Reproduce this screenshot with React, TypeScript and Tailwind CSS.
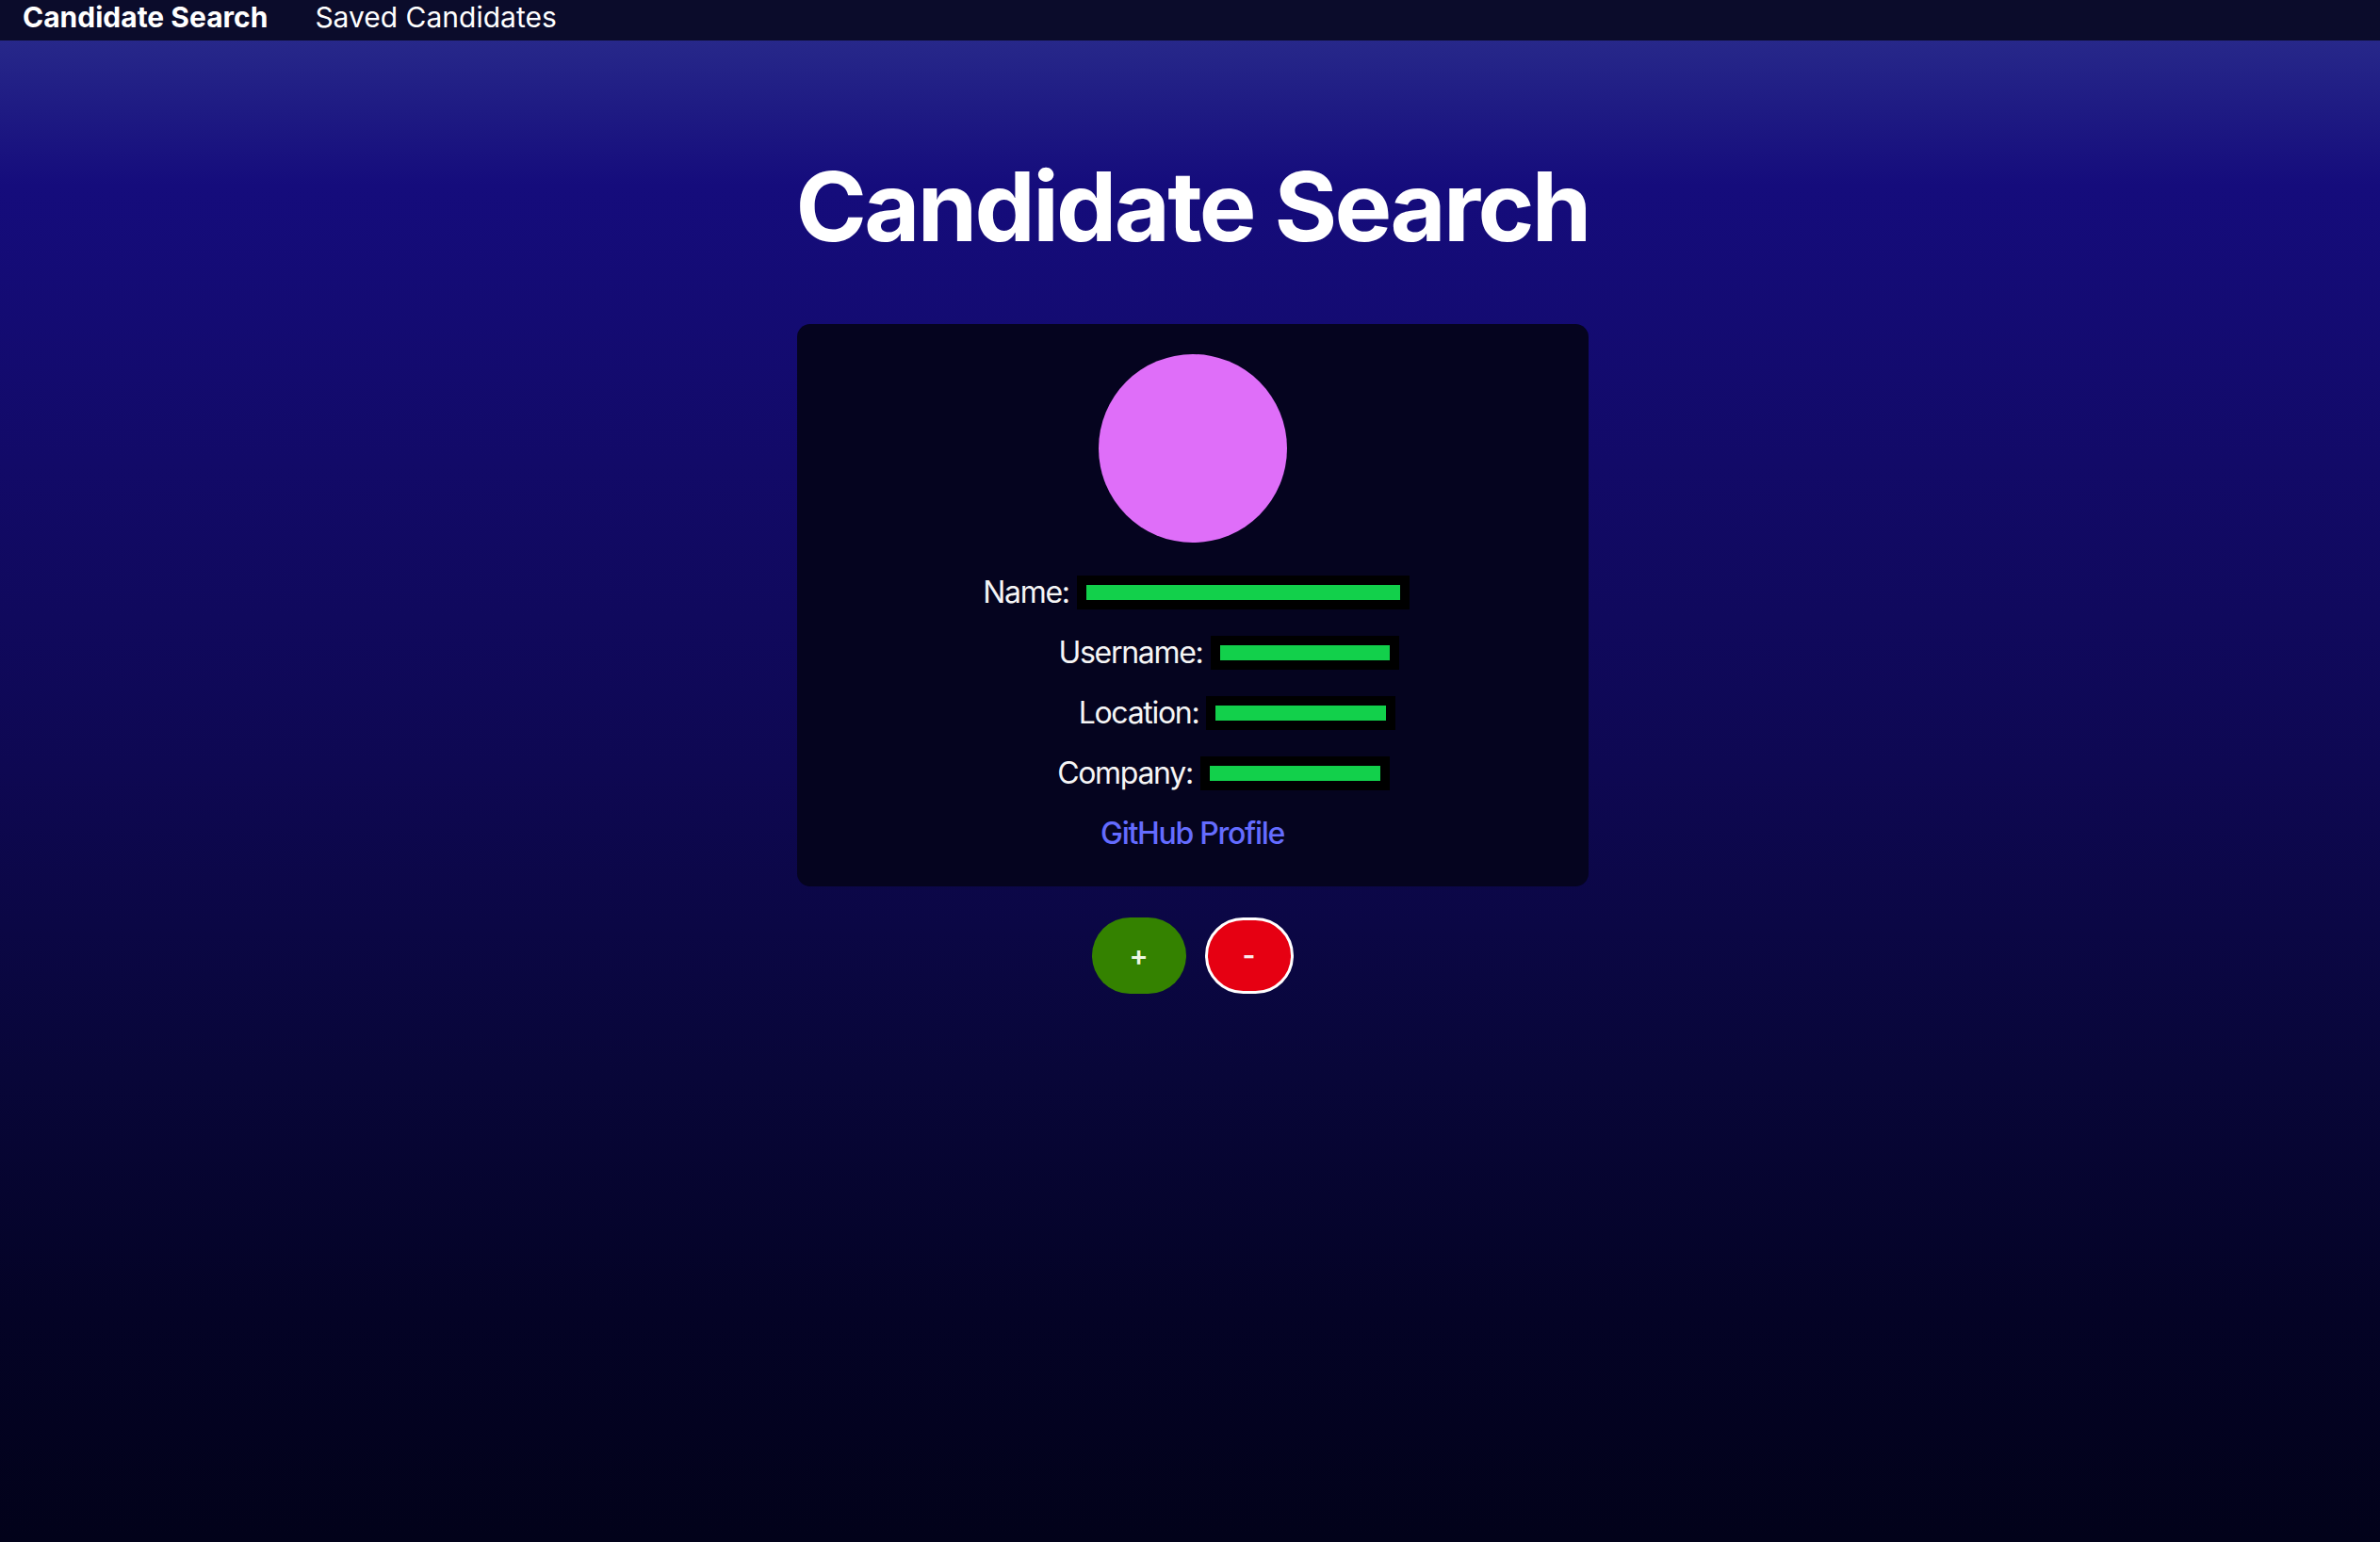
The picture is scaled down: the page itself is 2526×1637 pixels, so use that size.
const fields = [
  { label: "Name:", bar: "w-[333px]", spacer: "w-[8px]" },
  { label: "Username:", bar: "w-[180px]", spacer: "w-[77px]" },
  { label: "Location:", bar: "w-[181px]", spacer: "w-[95px]" },
  { label: "Company:", bar: "w-[181px]", spacer: "w-[66px]" },
];

function App() {
  return (
    <div className="min-h-[1637px] w-full bg-[linear-gradient(180deg,#27288a_2.6%,#150c7c_12%,#120a68_30%,#0e0852_50%,#080638_70%,#040326_85%,#02021a_100%)] font-['Inter','Liberation_Sans',sans-serif] text-[#f5f5f5]">
      {/* Top nav */}
      <nav className="flex h-[43px] items-start gap-[50px] bg-[#0b0c2b] px-[24px] text-[30px] leading-[1.21]">
        <span className="font-bold text-white">Candidate Search</span>
        <span className="text-white">Saved Candidates</span>
      </nav>

      <main className="flex flex-col items-center pl-[5px]">
        <h1 className="mt-[120px] text-[102px] font-bold leading-[1.1] tracking-[-2.7px] text-white">
          Candidate Search
        </h1>

        {/* Candidate card */}
        <div className="mt-[69px] flex w-[840px] flex-col items-center rounded-[14px] bg-[#05041f] pt-[32px] pb-[24px]">
          <div className="h-[200px] w-[200px] rounded-full bg-[#df6ef9]" />
          <div className="mt-[21px] flex flex-col items-center">
            {fields.map((f) => (
              <div key={f.label} className="flex h-[64px] items-center text-[32px] tracking-[-1.3px]">
                <span className={f.spacer} />
                <span>{f.label}</span>
                <span className="ml-[8px] flex bg-black p-[10px]">
                  <span className={`h-[16px] bg-[#12d04b] ${f.bar}`} />
                </span>
              </div>
            ))}
            <a href="#" className="flex h-[64px] items-center text-[32px] font-medium tracking-[-1.3px] text-[#646cff]">
              GitHub Profile
            </a>
          </div>
        </div>

        {/* Actions */}
        <div className="mt-[33px] flex gap-[20px]">
          <button className="flex h-[81px] w-[100px] items-center justify-center rounded-full bg-[#348200] text-[30px] font-semibold text-[#eef7e6]">
            +
          </button>
          <button className="flex h-[81px] w-[94px] items-center justify-center rounded-full border-[3px] border-white bg-[#e60012] text-[30px] font-semibold text-[#fbe9ea]">
            -
          </button>
        </div>
      </main>
    </div>
  );
}

export default App;
